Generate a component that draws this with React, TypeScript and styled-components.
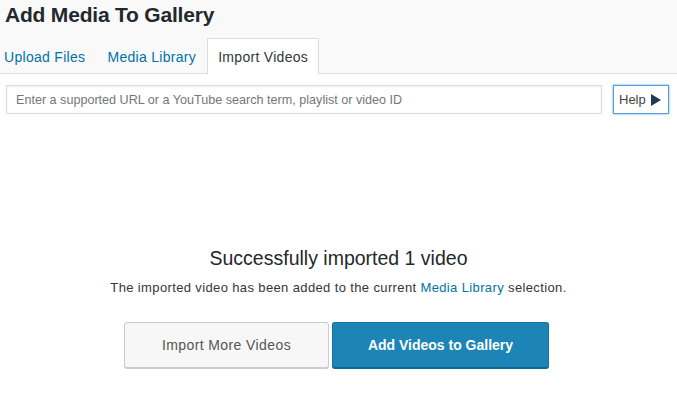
import React from 'react'
import styled, { createGlobalStyle } from 'styled-components'

const GlobalStyle = createGlobalStyle`
  body {
    margin: 0;
    background: #fff;
    font-family: "Liberation Sans", Arial, sans-serif;
    color: #23282d;
  }
`

const tabs = ['Upload Files', 'Media Library', 'Import Videos']

const App: React.FC = () => (
  <Page>
    <GlobalStyle />
    <Header>
      <Title>Add Media To Gallery</Title>
      <TabBar>
        {tabs.map((t, i) => (
          <Tab key={t} active={i === 2}>
            {t}
          </Tab>
        ))}
      </TabBar>
    </Header>
    <SearchRow>
      <SearchInput placeholder="Enter a supported URL or a YouTube search term, playlist or video ID" />
      <HelpButton>
        Help
        <svg width="10" height="12" viewBox="0 0 10 12">
          <polygon points="0,0 10,6 0,12" fill="#1f3a52" />
        </svg>
      </HelpButton>
    </SearchRow>
    <Result>
      <ResultTitle>Successfully imported 1 video</ResultTitle>
      <ResultText>
        The imported video has been added to the current <Link>Media Library</Link> selection.
      </ResultText>
      <Actions>
        <Button width={205}>Import More Videos</Button>
        <Button width={217} primary>
          Add Videos to Gallery
        </Button>
      </Actions>
    </Result>
  </Page>
)
export default App

const Page = styled.div`
  width: 100%;
  min-height: 395px;
`
const Header = styled.div`
  background: #f9f9f9;
  border-bottom: 1px solid #dddddd;
`
const Title = styled.h1`
  margin: 0;
  height: 38px;
  padding-left: 5px;
  font-size: 21px;
  letter-spacing: -0.2px;
  line-height: 30px;
  font-weight: 700;
  color: #23282d;
`
const TabBar = styled.div`
  display: flex;
  height: 35px;
`
const Tab = styled.div<{ active?: boolean }>`
  display: flex;
  align-items: center;
  padding: 0 10px;
  font-size: 14px;
  letter-spacing: 0.3px;
  color: ${(p) => (p.active ? '#32373c' : '#0073aa')};
  background: ${(p) => (p.active ? '#fff' : 'transparent')};
  border: 1px solid ${(p) => (p.active ? '#dddddd' : 'transparent')};
  border-bottom: none;
  margin-bottom: -1px;
  height: 36px;
  box-sizing: border-box;
  &:first-child {
    padding-left: 4px;
    border-left: none;
  }
`
const SearchRow = styled.div`
  display: flex;
  gap: 11px;
  padding: 11px 8px 0 6px;
`
const SearchInput = styled.input`
  flex: 1;
  height: 29px;
  box-sizing: border-box;
  border: 1px solid #dddddd;
  box-shadow: inset 0 1px 2px rgba(0, 0, 0, 0.07);
  padding: 0 9px;
  font-family: inherit;
  font-size: 12.6px;
  color: #32373c;
  outline: none;
  &::placeholder {
    color: #72777c;
  }
`
const HelpButton = styled.button`
  display: flex;
  align-items: center;
  gap: 5px;
  width: 56px;
  height: 29px;
  box-sizing: border-box;
  padding: 0 0 0 5px;
  background: #fff;
  border: 1px solid #5b9dd9;
  box-shadow: 0 0 2px rgba(30, 140, 190, 0.8);
  font-family: inherit;
  font-size: 13px;
  color: #444;
  border-radius: 0;
`
const Result = styled.div`
  display: flex;
  flex-direction: column;
  align-items: center;
  margin-top: 130px;
`
const ResultTitle = styled.div`
  font-size: 19.5px;
  line-height: 28px;
  color: #23282d;
`
const ResultText = styled.div`
  margin-top: 6px;
  font-size: 13px;
  letter-spacing: 0.37px;
  line-height: 20px;
  color: #32373c;
`
const Link = styled.span`
  color: #0073aa;
`
const Actions = styled.div`
  display: flex;
  gap: 3px;
  margin-top: 24px;
  margin-left: -4px;
`
const Button = styled.button<{ width: number; primary?: boolean }>`
  width: ${(p) => p.width}px;
  height: 46px;
  box-sizing: border-box;
  border-radius: 3px;
  font-family: inherit;
  font-size: 14px;
  letter-spacing: ${(p) => (p.primary ? 0 : 0.4)}px;
  font-weight: ${(p) => (p.primary ? 700 : 400)};
  color: ${(p) => (p.primary ? '#fff' : '#555')};
  background: ${(p) => (p.primary ? '#1c84b7' : '#f7f7f7')};
  border: 1px solid ${(p) => (p.primary ? '#0f73a6' : '#cccccc')};
  border-bottom-color: ${(p) => (p.primary ? '#0b6796' : '#cccccc')};
  box-shadow: 0 1px 0 ${(p) => (p.primary ? '#0b6796' : '#cccccc')};
`
